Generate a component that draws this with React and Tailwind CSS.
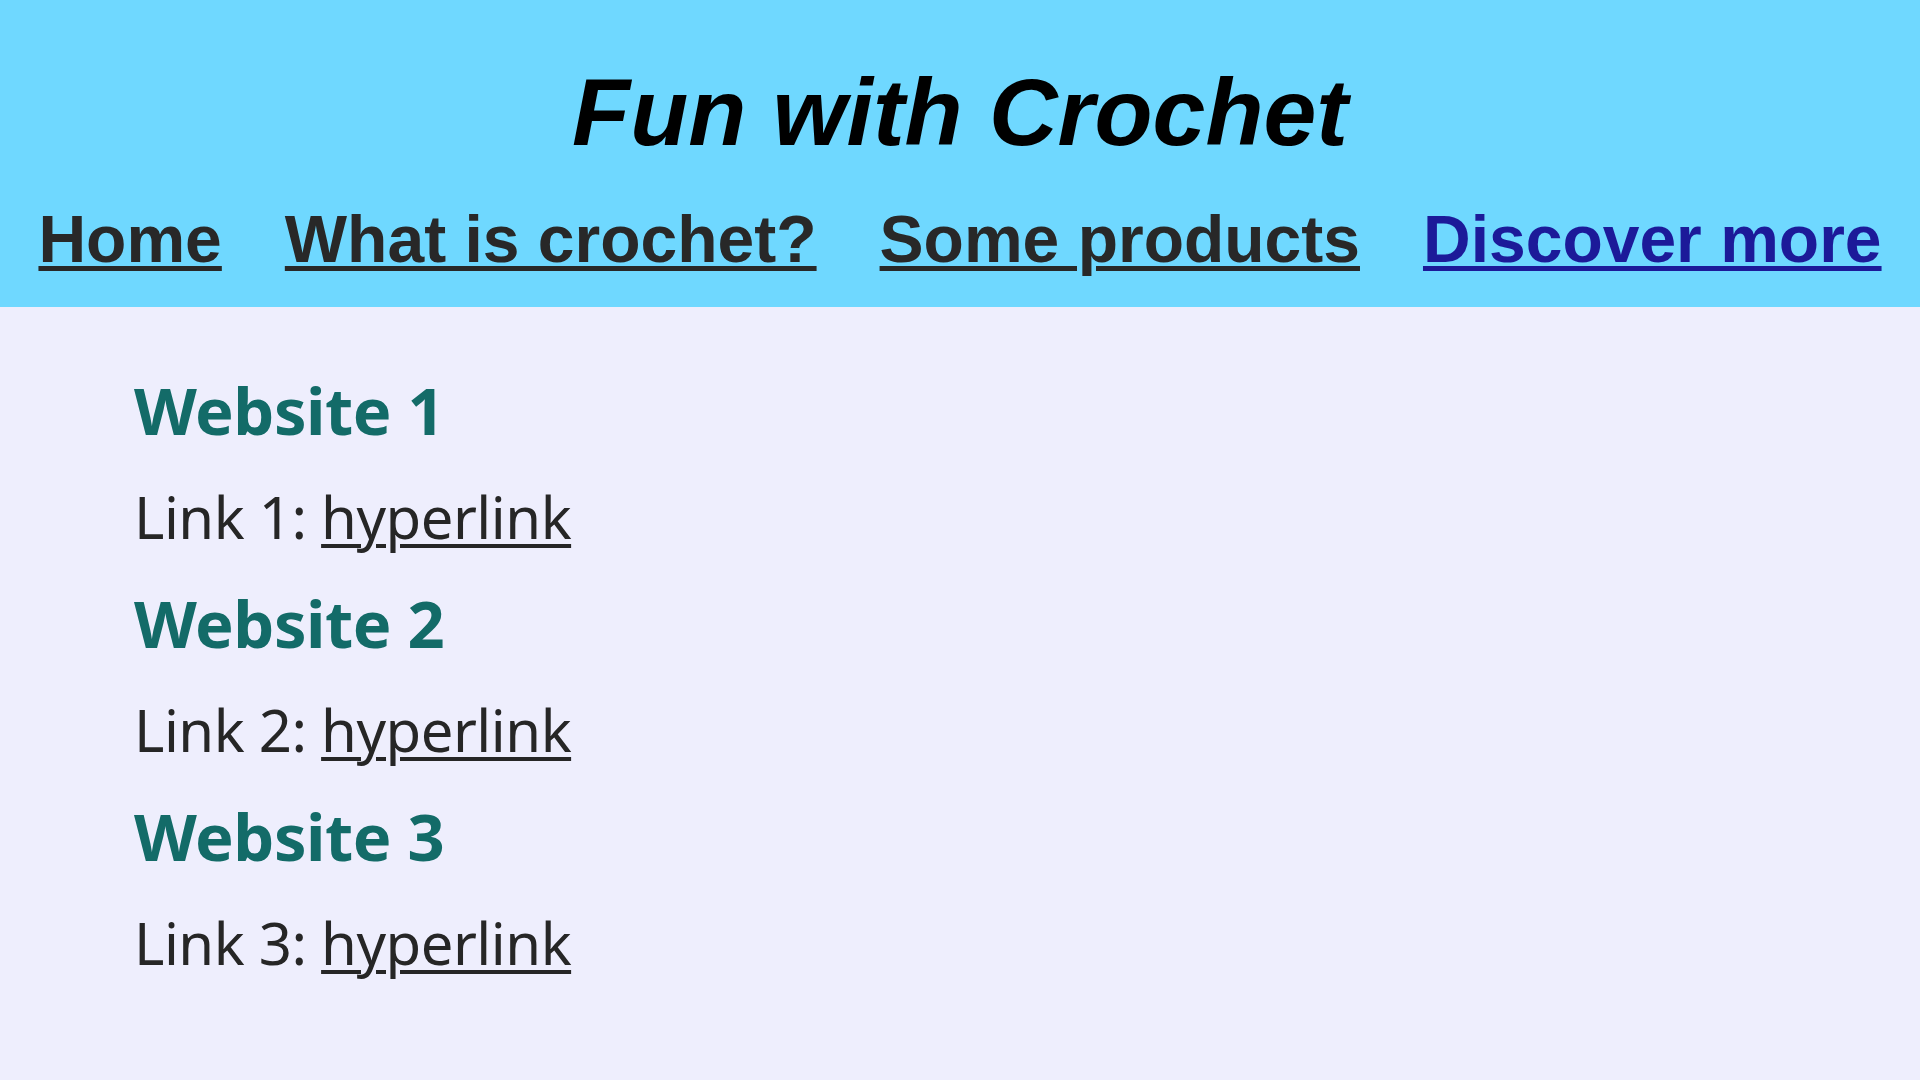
export default function App() {
  const nav = [
    { label: "Home", cls: "text-[#282828] decoration-[#282828]" },
    { label: "What is crochet?", cls: "text-[#282828] decoration-[#282828]" },
    { label: "Some products", cls: "text-[#282828] decoration-[#282828]" },
    { label: "Discover more", cls: "text-[#1c1a99] decoration-[#1c1a99]" },
  ];
  const sites = [1, 2, 3];
  return (
    <div className="w-[1920px] h-[1080px] bg-[#eeeefd] overflow-hidden">
      <header className="bg-[#6fd8ff] h-[307px] pt-[65px] flex flex-col items-center">
        <h1
          className="text-[95px] leading-[95px] font-bold italic text-black"
          style={{ fontFamily: '"Liberation Sans", Arial, sans-serif' }}
        >
          Fun with Crochet
        </h1>
        <nav
          className="mt-[46px] flex justify-center gap-[63px]"
          style={{ fontFamily: '"Liberation Sans", Arial, sans-serif' }}
        >
          {nav.map((n) => (
            <a
              key={n.label}
              href="#"
              className={`text-[66px] leading-[66px] font-bold underline decoration-[5px] underline-offset-[4px] ${n.cls}`}
            >
              {n.label}
            </a>
          ))}
        </nav>
      </header>
      <main
        className="pl-[134px] pt-[70px] flex flex-col gap-[44px]"
        style={{ fontFamily: '"Noto Sans", "Open Sans", sans-serif' }}
      >
        {sites.map((i) => (
          <div key={i} className="flex flex-col gap-[44px]">
            <h2 className="text-[65px] leading-[66px] font-bold tracking-[-0.5px] text-[#136b68]">
              Website {i}
            </h2>
            <p className="text-[58px] leading-[59px] font-normal tracking-[-0.5px] text-[#262626]">
              Link {i}:{" "}
              <a href="#" className="underline decoration-[4px] underline-offset-[5px] decoration-[#262626]">
                hyperlink
              </a>
            </p>
          </div>
        ))}
      </main>
    </div>
  );
}
